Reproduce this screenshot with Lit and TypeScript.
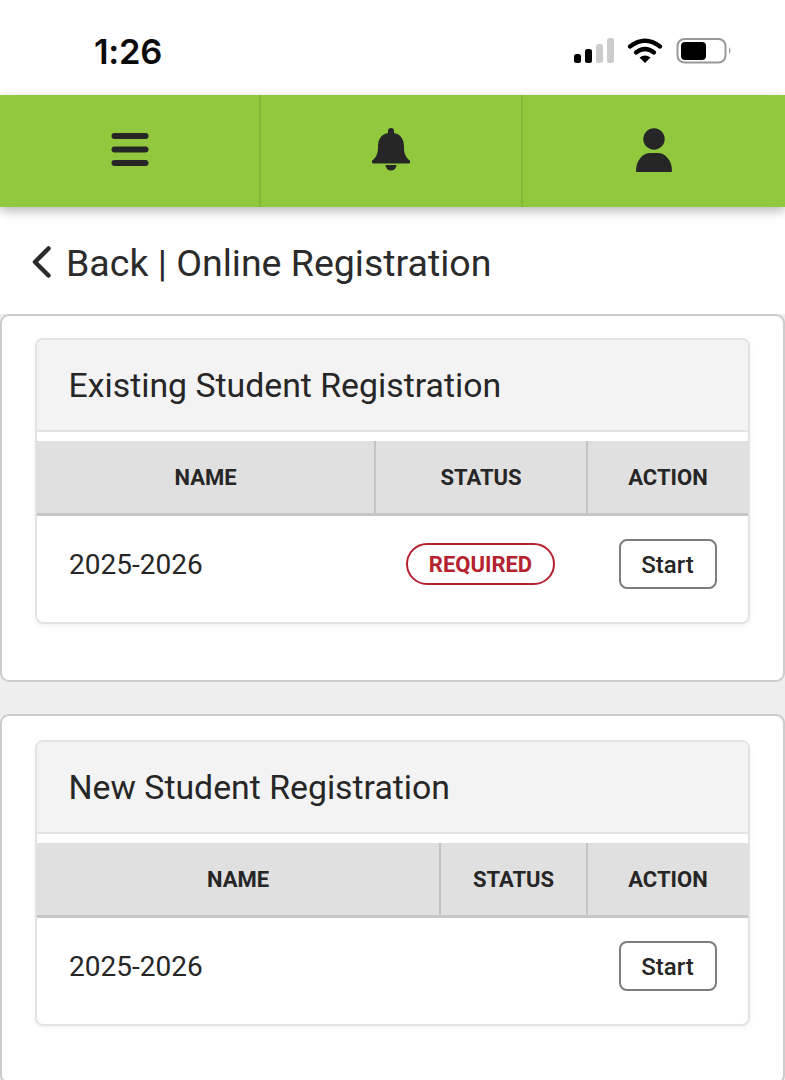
import { LitElement, html, css, svg } from "lit";
import { customElement } from "lit/decorators.js";

const statusIcons = svg`
  <rect x="0" y="16" width="7" height="9" rx="2.5" fill="#000"/>
  <rect x="11" y="11" width="7" height="14" rx="2.5" fill="#000"/>
  <rect x="22" y="6" width="7" height="19" rx="2.5" fill="#ccc"/>
  <rect x="33" y="0" width="7" height="25" rx="2.5" fill="#ccc"/>
  <path d="M56 8.500 Q71 -3 86 8.500" fill="none" stroke="#000" stroke-width="4.200" stroke-linecap="round"/>
  <path d="M62 14.500 Q71 7.500 80 14.500" fill="none" stroke="#000" stroke-width="4.200" stroke-linecap="round"/>
  <path d="M65.500 19.500 Q71 15.500 76.500 19.500 L71 25 Z" fill="#000"/>
  <rect x="103.500" y="1" width="48" height="23.500" rx="7" fill="none" stroke="#999" stroke-width="2"/>
  <rect x="107" y="4" width="25" height="18" rx="4" fill="#000"/>
  <path d="M155 9 Q158 12.500 155 16 Z" fill="#999"/>
`;

@customElement("app-root")
export class AppRoot extends LitElement {
  static styles = css`
    :host {
      display: block;
      height: 1080px;
      overflow: hidden;
      background: #eeeeee;
      font-family: Roboto, "Liberation Sans", sans-serif;
      color: #262626;
    }
    .status {
      height: 95px;
      background: #fff;
      display: flex;
      align-items: center;
      justify-content: space-between;
      box-sizing: border-box;
      padding: 8px 51px 0 94px;
    }
    .time {
      font-family: Inter, "Liberation Sans", sans-serif;
      font-size: 34.500px;
      font-weight: 600;
      color: #0a0a0a;
      letter-spacing: -0.3px;
      line-height: 1;
      margin-top: 2px;
    }
    .status svg { display: block; margin-top: -1px; margin-right: 1px; }
    .nav {
      height: 112px;
      background: #92c83e;
      display: grid;
      grid-template-columns: 261px 262px 1fr;
      box-shadow: 0 4px 10px rgba(0, 0, 0, 0.28);
      position: relative;
    }
    .nav > div {
      display: flex;
      align-items: center;
      justify-content: center;
      border-right: 2px solid #83b838;
      padding-bottom: 3px;
    }
    .nav > div:last-child { border-right: 0; }
    .nav svg { display: block; }
    .title {
      height: 107px;
      background: #fff;
      display: flex;
      align-items: center;
      box-sizing: border-box;
      padding: 5px 0 0 32px;
      gap: 15px;
      font-size: 37.500px;
      color: #2b2b2b;
    }
    .title svg { display: block; margin-top: -2px; }
    .card {
      background: #fff;
      border: 2px solid #cccccc;
      border-radius: 9px;
      box-sizing: border-box;
      padding: 22px 33px 56px;
    }
    .card + .card { margin-top: 32px; padding-top: 24px; }
    .panel {
      border: 2px solid #e3e3e3;
      border-radius: 8px;
      box-shadow: 0 2px 5px rgba(0, 0, 0, 0.05);
      overflow: hidden;
    }
    .panel-head {
      height: 92px;
      box-sizing: border-box;
      background: #f3f3f3;
      border-bottom: 2px solid #e3e3e3;
      display: flex;
      align-items: center;
      padding-left: 31.500px;
      font-size: 33.800px;
    }
    .table { margin-top: 9px; }
    .row { display: grid; }
    .cols-a { grid-template-columns: 339px 212px 1fr; }
    .cols-b { grid-template-columns: 404px 147px 1fr; }
    .thead {
      height: 75px;
      box-sizing: border-box;
      background: #e0e0e0;
      border-bottom: 3px solid #c6c6c6;
    }
    .th {
      display: flex;
      align-items: center;
      justify-content: center;
      font-size: 22px;
      font-weight: 700;
      color: #262626;
      border-right: 2px solid #c4c4c4;
      box-sizing: border-box;
    }
    .th:last-child { border-right: 0; }
    .tbody { height: 106px; box-sizing: border-box; padding-bottom: 10px; }
    .td { display: flex; align-items: center; justify-content: center; }
    .td.year { justify-content: flex-start; padding-left: 32px; font-size: 28px; }
    .pill {
      box-sizing: border-box;
      width: 149px;
      height: 42px;
      border: 2px solid #b5222f;
      border-radius: 21px;
      display: flex;
      align-items: center;
      justify-content: center;
      color: #b5222f;
      font-size: 22px;
      font-weight: 700;
      margin-left: -3px;
    }
    .btn {
      box-sizing: border-box;
      width: 98px;
      height: 50px;
      margin-left: -1px;
      background: #fff;
      border: 2px solid #7d7d7d;
      border-radius: 8px;
      display: flex;
      align-items: center;
      justify-content: center;
      font: 500 24px Roboto, sans-serif;
      color: #262626;
      padding: 2px 0 0;
    }
  `;

  private panel(title: string, cols: string, required: boolean) {
    return html`
      <section class="card">
        <div class="panel">
          <div class="panel-head">${title}</div>
          <div class="table">
            <div class="row thead ${cols}">
              <div class="th">NAME</div>
              <div class="th">STATUS</div>
              <div class="th">ACTION</div>
            </div>
            <div class="row tbody ${cols}">
              <div class="td year">2025-2026</div>
              <div class="td">${required ? html`<span class="pill">REQUIRED</span>` : ""}</div>
              <div class="td"><button class="btn">Start</button></div>
            </div>
          </div>
        </div>
      </section>
    `;
  }

  render() {
    return html`
      <div class="status">
        <span class="time">1:26</span>
        <svg width="159" height="26" viewBox="0 0 159 26">${statusIcons}</svg>
      </div>
      <nav class="nav">
        <div>
          <svg width="38" height="33" viewBox="0 0 38 33" fill="#262626">
            <rect x="0.500" y="0" width="37" height="6" rx="3"/>
            <rect x="0.500" y="13.500" width="37" height="6" rx="3"/>
            <rect x="0.500" y="27" width="37" height="6" rx="3"/>
          </svg>
        </div>
        <div>
          <svg width="38" height="43" viewBox="0 0 38 43" fill="#262626">
            <path d="M19 0 a3 3 0 0 1 3 3 v2 C29.500 6.500 32 12 32 19 C32 26 34 29 37 32 a1.800 1.800 0 0 1 -1 3.500 H2 a1.800 1.800 0 0 1 -1 -3.500 C4 29 6 26 6 19 C6 12 8.500 6.500 16 5 v-2 a3 3 0 0 1 3 -3 Z"/>
            <path d="M13.500 37 H24.500 A5.500 5.500 0 0 1 13.500 37 Z"/>
          </svg>
        </div>
        <div>
          <svg width="38" height="44" viewBox="0 0 38 44" fill="#262626">
            <circle cx="19" cy="11" r="10.700"/>
            <path d="M1 43 C1 32 8 25 15 25 H23 C30 25 37 32 37 43 Q37 44 36 44 H2 Q1 44 1 43 Z"/>
          </svg>
        </div>
      </nav>
      <div class="title">
        <svg width="19" height="32" viewBox="0 0 19 32" fill="none" stroke="#2b2b2b" stroke-width="4.500" stroke-linecap="round" stroke-linejoin="round">
          <path d="M16.500 2.500 L3 16 L16.500 29.500"/>
        </svg>
        <span>Back | Online Registration</span>
      </div>
      ${this.panel("Existing Student Registration", "cols-a", true)}
      ${this.panel("New Student Registration", "cols-b", false)}
    `;
  }
}
